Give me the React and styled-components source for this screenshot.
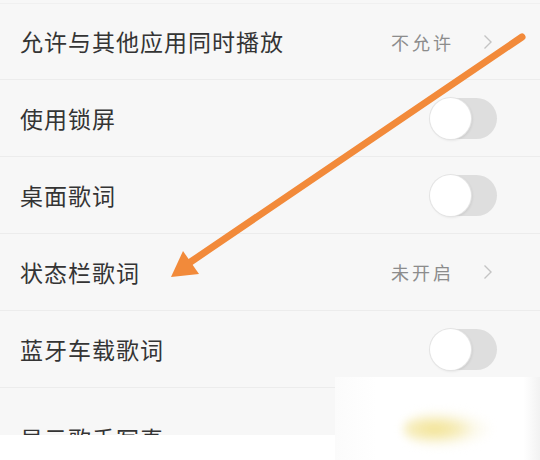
import React from "react";
import styled, { createGlobalStyle } from "styled-components";

const GlobalStyle = createGlobalStyle`
  html, body {
    margin: 0;
    padding: 0;
    background: #f7f7f7;
  }
  * {
    box-sizing: border-box;
  }
`;

const rows = [
  { label: "允许与其他应用同时播放", value: "不允许" },
  { label: "使用锁屏", toggle: true },
  { label: "桌面歌词", toggle: true },
  { label: "状态栏歌词", value: "未开启" },
  { label: "蓝牙车载歌词", toggle: true },
  { label: "显示歌手写真", last: true },
];

function Chevron() {
  return (
    <svg width="10" height="16" viewBox="0 0 10 16">
      <path d="M1.5 1.5 L8 8 L1.5 14.5" fill="none" stroke="#c4c4c4" strokeWidth="1.4" />
    </svg>
  );
}

export default function App() {
  return (
    <Page>
      <GlobalStyle />
      <List>
        {rows.map((row) => (
          <Row key={row.label} $last={row.last}>
            <Label>{row.label}</Label>
            {row.value && (
              <Trailing>
                <Value>{row.value}</Value>
                <Chevron />
              </Trailing>
            )}
            {row.toggle && (
              <Switch>
                <Knob />
              </Switch>
            )}
          </Row>
        ))}
      </List>

      {/* screenshot artefacts laid over the list */}
      <CornerPatch>
        <Glow />
      </CornerPatch>
      <BottomPatch />

      <Arrow viewBox="0 0 540 460">
        <line
          x1="522"
          y1="37"
          x2="189"
          y2="263"
          stroke="#f28a3a"
          strokeWidth="7"
          strokeLinecap="round"
        />
        <polygon points="171,277 183,251 199,274" fill="#f28a3a" />
      </Arrow>
    </Page>
  );
}

const Page = styled.div`
  position: relative;
  width: 540px;
  height: 460px;
  overflow: hidden;
  background: #f7f7f7;
  font-family: "Noto Sans CJK SC", "Noto Sans", sans-serif;
`;

const List = styled.div`
  display: flex;
  flex-direction: column;
  padding-top: 3px;
`;

const Row = styled.div`
  display: flex;
  align-items: ${(p) => (p.$last ? "flex-start" : "center")};
  justify-content: space-between;
  height: 77px;
  padding: ${(p) => (p.$last ? "39px 43px 0 20px" : "0 43px 0 20px")};
  border-bottom: 1.5px solid #ececec;
  &:first-child {
    border-top: 1px solid #f0f0f0;
  }
`;

const Label = styled.span`
  font-size: 23px;
  letter-spacing: 1px;
  color: #343434;
  line-height: 1;
`;

const Trailing = styled.div`
  display: flex;
  align-items: center;
  gap: 29px;
  padding-right: 4px;
`;

const Value = styled.span`
  font-size: 18px;
  letter-spacing: 3px;
  color: #8c8c8c;
`;

const Switch = styled.div`
  display: flex;
  align-items: center;
  width: 67px;
  height: 41px;
  border-radius: 21px;
  background: #dedede;
`;

const Knob = styled.div`
  width: 41px;
  height: 41px;
  border-radius: 50%;
  background: #ffffff;
  box-shadow: 0 0 0 1px #e4e4e4, 1px 1px 3px rgba(0, 0, 0, 0.12);
`;

const CornerPatch = styled.div`
  position: absolute;
  left: 335px;
  top: 377px;
  right: 0;
  bottom: 0;
  background: linear-gradient(to right, #fbfbfb 0%, #ffffff 20%, #ffffff 92%, #f2f2f2 100%);
`;

const Glow = styled.div`
  position: absolute;
  left: 68px;
  top: 32px;
  width: 90px;
  height: 40px;
  border-radius: 50%;
  background: radial-gradient(ellipse at 35% 50%, #f3e391 0%, #f6ecb8 28%, rgba(250, 246, 225, 0.6) 50%, rgba(255, 255, 255, 0) 72%);
  filter: blur(4px);
`;

const BottomPatch = styled.div`
  position: absolute;
  left: 0;
  width: 335px;
  top: 435px;
  bottom: 0;
  background: #ffffff;
`;

const Arrow = styled.svg`
  position: absolute;
  left: 0;
  top: 0;
  width: 540px;
  height: 460px;
  pointer-events: none;
`;
